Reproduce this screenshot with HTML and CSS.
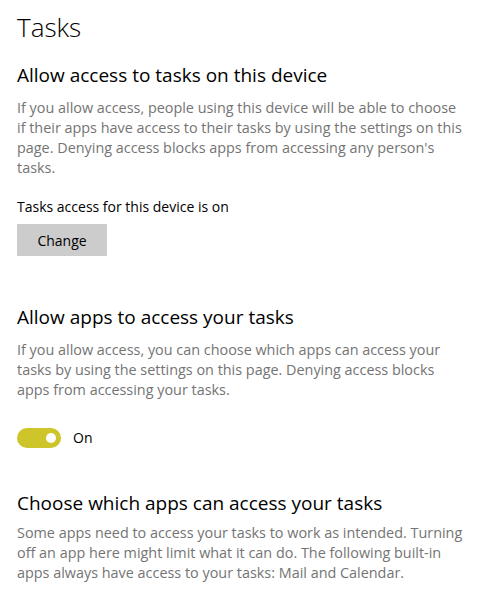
FILE: index.html
```html
<!DOCTYPE html>
<html lang="en">
<head>
<meta charset="utf-8">
<title>Tasks</title>
<link rel="stylesheet" href="styles.css">
</head>
<body>
<main class="page">
  <h1 class="title">Tasks</h1>

  <section class="section first">
    <h2 class="heading">Allow access to tasks on this device</h2>
    <p class="desc">If you allow access, people using this device will be able to choose if their apps have access to their tasks by using the settings on this page. Denying access blocks apps from accessing any person's tasks.</p>
    <p class="status">Tasks access for this device is on</p>
    <button class="btn" type="button">Change</button>
  </section>

  <section class="section second">
    <h2 class="heading">Allow apps to access your tasks</h2>
    <p class="desc">If you allow access, you can choose which apps can access your tasks by using the settings on this page. Denying access blocks apps from accessing your tasks.</p>
    <div class="toggle-row">
      <span class="toggle"><span class="knob"></span></span>
      <span class="toggle-label">On</span>
    </div>
  </section>

  <section class="section third">
    <h2 class="heading">Choose which apps can access your tasks</h2>
    <p class="desc">Some apps need to access your tasks to work as intended. Turning off an app here might limit what it can do. The following built-in apps always have access to your tasks: Mail and Calendar.</p>
  </section>
</main>
</body>
</html>
```

FILE: styles.css
```css
html, body {
  margin: 0;
  padding: 0;
  background: #ffffff;
}

body {
  font-family: "Open Sans", "Noto Sans", "Liberation Sans", sans-serif;
  color: #000000;
}

.page {
  padding: 9px 17px 0 17px;
  width: 446px;
}

.title {
  margin: 0;
  font-size: 26px;
  font-weight: 300;
  line-height: 36px;
}

.heading {
  margin: 0;
  font-size: 19px;
  font-weight: 400;
  line-height: 28px;
}

.desc {
  margin: 9px 0 0 0;
  font-size: 14.4px;
  line-height: 20px;
  color: #747474;
}

.section.first {
  margin-top: 16px;
}

.status {
  margin: 19px 0 0 0;
  font-size: 14px;
  line-height: 20px;
}

.btn {
  display: block;
  margin-top: 7px;
  width: 90px;
  height: 32px;
  border: none;
  background: #cccccc;
  font-family: inherit;
  font-size: 14px;
  color: #000000;
  padding: 0;
}

.section.second {
  margin-top: 47px;
}

.toggle-row {
  margin-top: 28px;
  display: flex;
  align-items: center;
  gap: 12px;
  height: 20px;
}

.toggle {
  width: 44px;
  height: 20px;
  border-radius: 10px;
  background: #cdc52a;
  display: flex;
  align-items: center;
  justify-content: flex-end;
  padding-right: 5px;
  box-sizing: border-box;
}

.knob {
  width: 10px;
  height: 10px;
  border-radius: 50%;
  background: #ffffff;
}

.toggle-label {
  font-size: 14px;
  line-height: 20px;
}

.section.third {
  margin-top: 41px;
}

.section.third .desc {
  margin-top: 6px;
}
```
